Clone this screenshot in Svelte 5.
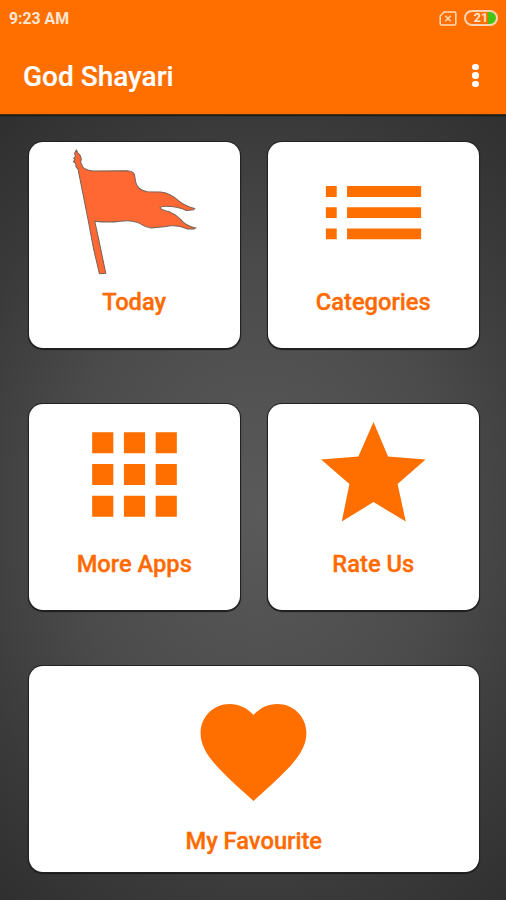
<script lang="ts">
  const tiles = [
    { label: 'Today', icon: 'flag' },
    { label: 'Categories', icon: 'list' },
    { label: 'More Apps', icon: 'apps' },
    { label: 'Rate Us', icon: 'star' },
    { label: 'My Favourite', icon: 'heart', wide: true }
  ];

  const paths: Record<string, string> = {
    list: 'M3 7h2.05v2.05H3zM3 11h2.05v2.05H3zM3 15h2.05v2.05H3zM7 7h14v2.05H7zM7 11h14v2.05H7zM7 15h14v2.05H7z',
    apps: 'M4 4h4v4H4zM10 4h4v4h-4zM16 4h4v4h-4zM4 10h4v4H4zM10 10h4v4h-4zM16 10h4v4h-4zM4 16h4v4H4zM10 16h4v4h-4zM16 16h4v4h-4z',
    star: 'M12 2.1l2.75 6.5 7.1.55-5.3 4.65 1.55 7.1-6.1-3.7-6 3.7 1.45-7.1-5.35-4.65 7.05-.55z',
    heart: 'M12 21.35l-1.45-1.32C5.4 15.36 2 12.28 2 8.5 2 5.42 4.42 3 7.5 3c1.74 0 3.41.81 4.5 2.09C13.09 3.81 14.76 3 16.5 3 19.58 3 22 5.42 22 8.5c0 3.78-3.4 6.86-8.55 11.54L12 21.35z'
  };
</script>

<div class="screen">
  <header>
    <div class="status">
      <span>9:23 AM</span>
      <div class="indicators">
        <svg class="sim" viewBox="0 0 18 15">
          <path d="M5 1h10.5a1.3 1.3 0 0 1 1.3 1.3v10.4a1.3 1.3 0 0 1-1.3 1.3h-13a1.3 1.3 0 0 1-1.3-1.3V5z" />
          <path d="M6.3 4.7l5.4 5.6M11.7 4.7l-5.4 5.6" />
        </svg>
        <div class="battery"><span>21</span></div>
      </div>
    </div>
    <div class="toolbar">
      <h1>God Shayari</h1>
      <button class="more" aria-label="More options">
        <i></i><i></i><i></i>
      </button>
    </div>
  </header>

  <main>
    {#each tiles as { label, icon, wide }}
      <button class="tile" class:wide>
        {#if icon === 'flag'}
          <svg class="icon flag" viewBox="152 59 380 380">
            <path d="M168 62L173 71L179 78L183 88L181 99L187 112Q194 122 218 125L320 124Q338 125 342 136L345 156Q349 181 380 187L420 188Q446 190 474 214Q493 229 522 237L519 241L497 243Q480 234 451 231Q424 229 418 235Q423 242 447 247Q471 258 487 277Q500 290 525 295L520 298L499 298Q475 286 450 289Q410 295 389 295Q373 292 354 280Q330 270 300 275Q265 280 223 275L234 325L256 431L237 432L220 360L203 270L173 119L167 112L166 102L159 97L164 91L160 87L165 82L163 71Z" />
          </svg>
        {:else}
          <svg class="icon" viewBox="0 0 24 24">
            <path d={paths[icon]} />
          </svg>
        {/if}
        <span>{label}</span>
      </button>
    {/each}
  </main>
</div>

<style>
  :global(body) {
    margin: 0;
  }

  * {
    box-sizing: border-box;
  }

  .screen {
    width: 506px;
    height: 900px;
    overflow: hidden;
    font-family: Roboto, sans-serif;
    background: radial-gradient(ellipse 400px 500px at 260px 510px, #5a5a5a 0%, #4b4b4b 48%, #3a3a3a 78%, #303030 100%);
  }

  button {
    border: 0;
    padding: 0;
    font: inherit;
  }

  header {
    height: 115px;
    background: #ff6f00;
    color: #fff;
    border-bottom: 1px solid #4a2c10;
    box-shadow: 0 1px 1px #1c1c1c;
  }

  .status {
    display: flex;
    justify-content: space-between;
    align-items: center;
    height: 37px;
    padding: 0 8px 0 9px;
    font-size: 15.8px;
    font-weight: 700;
    color: #ffe6d2;
  }

  .indicators {
    display: flex;
    align-items: center;
    gap: 7px;
  }

  .sim {
    width: 18px;
    height: 15px;
    fill: none;
    stroke: #ffdcbc;
    stroke-width: 1.5;
  }

  .battery {
    width: 34px;
    height: 16px;
    margin-top: -1px;
    border: 2px solid #ffd3b0;
    border-radius: 8px;
    background: linear-gradient(90deg, transparent 74%, #45c414 74%);
    display: flex;
    align-items: center;
    justify-content: center;
    font-size: 12.5px;
    line-height: 12px;
  }

  .toolbar {
    display: flex;
    justify-content: space-between;
    align-items: center;
    height: 77px;
    padding: 0 22.5px 0 23px;
  }

  h1 {
    margin: 1px 0 0;
    font-size: 28px;
    font-weight: 500;
    -webkit-text-stroke: 0.2px;
  }

  .more {
    display: flex;
    flex-direction: column;
    align-items: center;
    gap: 2px;
    width: 16px;
    background: none;
  }

  .more i {
    width: 6.4px;
    height: 6.4px;
    border-radius: 50%;
    background: #fff;
  }

  main {
    display: grid;
    grid-template-columns: 1fr 1fr;
    gap: 56px 27.5px;
    padding: 27px 27px 0 28.5px;
  }

  .tile {
    height: 206px;
    padding-top: 7.4px;
    display: flex;
    flex-direction: column;
    align-items: center;
    background: #fff;
    border-radius: 14px;
    box-shadow: 0 0 0 1px #222, 0 1px 1px 1px #1a1a1a;
    color: #ff6a00;
    font-size: 23.7px;
    font-weight: 500;
    line-height: 28px;
    -webkit-text-stroke: 0.35px;
  }

  .wide {
    grid-column: span 2;
    padding-top: 22px;
  }

  .icon {
    width: 127px;
    height: 127px;
    margin-bottom: 12px;
    fill: #ff6f00;
  }

  .flag {
    fill: #ff6733;
    stroke: #756458;
    stroke-width: 3;
  }
</style>
